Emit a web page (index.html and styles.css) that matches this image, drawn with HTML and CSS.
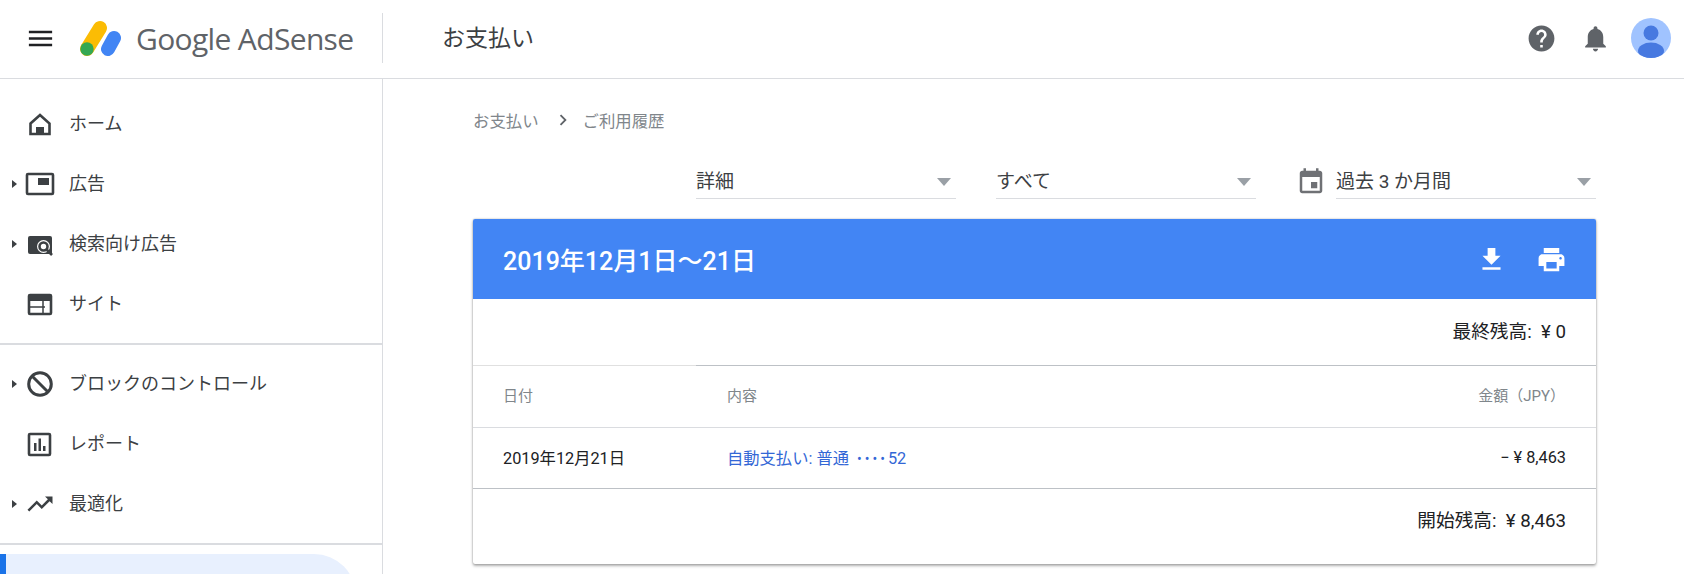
FILE: index.html
```html
<!DOCTYPE html>
<html lang="ja">
<head>
<meta charset="utf-8">
<title>お支払い - Google AdSense</title>
<link rel="stylesheet" href="styles.css">
</head>
<body>
<header class="topbar">
  <div class="brand">
    <svg class="menu-icon" viewBox="0 0 24 24"><path d="M3 18h18v-2H3v2zm0-5h18v-2H3v2zm0-7v2h18V6H3z"/></svg>
    <svg class="logo-mark" viewBox="0 0 42 36">
      <line x1="20" y1="8" x2="7" y2="29" class="logo-yellow"/>
      <line x1="34" y1="18" x2="28" y2="29" class="logo-blue"/>
      <circle cx="7" cy="29" r="6.7" class="logo-green"/>
    </svg>
    <span class="logo-text">Google AdSense</span>
    <span class="brand-divider"></span>
  </div>
  <h1 class="page-title">お支払い</h1>
  <div class="top-actions">
    <svg class="top-icon help" viewBox="0 0 24 24"><path d="M12 2C6.48 2 2 6.48 2 12s4.48 10 10 10 10-4.48 10-10S17.52 2 12 2zm1 17h-2v-2h2v2zm2.07-7.75l-.9.92C13.45 12.9 13 13.5 13 15h-2v-.5c0-1.1.45-2.1 1.17-2.83l1.24-1.26c.37-.36.59-.86.59-1.41 0-1.1-.9-2-2-2s-2 .9-2 2H8c0-2.21 1.79-4 4-4s4 1.79 4 4c0 .88-.36 1.68-.93 2.25z"/></svg>
    <svg class="top-icon bell" viewBox="0 0 24 24"><path d="M12 22c1.1 0 2-.9 2-2h-4c0 1.1.9 2 2 2zm6-6v-5c0-3.07-1.63-5.64-4.5-6.32V4c0-.83-.67-1.5-1.5-1.5s-1.5.67-1.5 1.5v.68C7.64 5.36 6 7.92 6 11v5l-2 2v1h16v-1l-2-2z"/></svg>
    <svg class="avatar" viewBox="0 0 40 40"><defs><clipPath id="avatar-clip"><circle cx="20" cy="20" r="20"/></clipPath></defs><circle cx="20" cy="20" r="20" class="avatar-bg"/><g clip-path="url(#avatar-clip)" class="avatar-fg"><circle cx="20" cy="15" r="7.5"/><ellipse cx="20" cy="33" rx="13" ry="8.5"/></g></svg>
  </div>
</header>
<div class="shell">
  <aside class="sidebar">
    <nav class="nav-group first">
      <a class="nav-item"><span class="caret none"></span>
        <svg class="nav-icon" viewBox="0 0 30 30"><path class="ln" d="M5.500 14.500L15 6l9.500 8.500V25h-19z"/><rect class="fl" x="11" y="18" width="8" height="7"/></svg>
        <span class="nav-label">ホーム</span></a>
      <a class="nav-item"><span class="caret"></span>
        <svg class="nav-icon" viewBox="0 0 30 30"><rect class="ln" x="2" y="5" width="26" height="20" rx="1"/><rect class="fl" x="13" y="9" width="11" height="7"/></svg>
        <span class="nav-label">広告</span></a>
      <a class="nav-item"><span class="caret"></span>
        <svg class="nav-icon" viewBox="0 0 30 30"><path class="fl" d="M5 7h20a2 2 0 0 1 2 2v16H5a2 2 0 0 1-2-2V9a2 2 0 0 1 2-2z"/><circle class="ln-w" cx="18.500" cy="17.500" r="6.500"/><circle class="ln" cx="18.500" cy="17.500" r="4"/><path class="ln" d="M21.500 20.500l5.500 5.500"/></svg>
        <span class="nav-label">検索向け広告</span></a>
      <a class="nav-item"><span class="caret none"></span>
        <svg class="nav-icon" viewBox="0 0 30 30"><rect class="ln" x="4" y="6" width="22" height="19" rx="1"/><rect class="fl" x="4" y="6" width="22" height="6"/><path class="ln-thin" d="M4 18h16M18 12v13"/></svg>
        <span class="nav-label">サイト</span></a>
    </nav>
    <nav class="nav-group">
      <a class="nav-item"><span class="caret"></span>
        <svg class="nav-icon" viewBox="0 0 30 30"><circle class="ln-b" cx="15" cy="15" r="11.300"/><path class="ln-b" d="M7 7l16 16"/></svg>
        <span class="nav-label">ブロックのコントロール</span></a>
      <a class="nav-item"><span class="caret none"></span>
        <svg class="nav-icon" viewBox="0 0 30 30"><rect class="ln" x="4" y="5" width="21" height="21" rx="1"/><path class="fl" d="M9 14h2.500v8H9zM13.500 9.500H16V22h-2.500zM18 17h2.500v5H18z"/></svg>
        <span class="nav-label">レポート</span></a>
      <a class="nav-item"><span class="caret"></span>
        <svg class="nav-icon" viewBox="0 0 24 24"><path class="fl" d="M16 6l2.290 2.290-4.880 4.880-4-4L2 16.590 3.410 18l6-6 4 4 6.300-6.290L22 12V6z"/></svg>
        <span class="nav-label">最適化</span></a>
    </nav>
    <div class="nav-active"></div>
  </aside>
  <main class="content">
    <div class="breadcrumb">
      <span>お支払い</span>
      <svg class="crumb-sep" viewBox="0 0 24 24"><path d="M10 6L8.590 7.410 13.170 12l-4.580 4.590L10 18l6-6z"/></svg>
      <span>ご利用履歴</span>
    </div>
    <div class="filters">
      <div class="select"><span>詳細</span><i class="tri"></i></div>
      <div class="select"><span>すべて</span><i class="tri"></i></div>
      <div class="date-filter">
        <svg class="cal-icon" viewBox="0 0 24 24"><path d="M17 12h-5v5h5v-5zM16 1v2H8V1H6v2H5c-1.110 0-1.990.9-1.990 2L3 19c0 1.100.89 2 2 2h14c1.100 0 2-.9 2-2V5c0-1.100-.9-2-2-2h-1V1h-2zm3 18H5V8h14v11z"/></svg>
        <div class="select"><span>過去 3 か月間</span><i class="tri"></i></div>
      </div>
    </div>
    <section class="card">
      <div class="card-head">
        <h2>2019年12月1日～21日</h2>
        <div class="card-actions">
          <svg viewBox="0 0 24 24"><path d="M19 9h-4V3H9v6H5l7 7 7-7zM5 18v2h14v-2H5z"/></svg>
          <svg viewBox="0 0 24 24"><path d="M19 8H5c-1.660 0-3 1.340-3 3v6h4v4h12v-4h4v-6c0-1.660-1.340-3-3-3zm-3 11H8v-5h8v5zm3-7c-.55 0-1-.45-1-1s.45-1 1-1 1 .45 1 1-.45 1-1 1zm-1-9H6v4h12V3z"/></svg>
        </div>
      </div>
      <div class="balance end">最終残高:&nbsp; ¥ 0</div>
      <div class="row thead">
        <span class="c-date">日付</span><span class="c-desc">内容</span><span class="c-amt">金額（JPY）</span>
      </div>
      <div class="row tbody">
        <span class="c-date">2019年12月21日</span><a class="c-desc link">自動支払い: 普通 <span class="dots">••••</span>52</a><span class="c-amt num">− ¥ 8,463</span>
      </div>
      <div class="balance start">開始残高:&nbsp; ¥ 8,463</div>
    </section>
  </main>
</div>
</body>
</html>
```
FILE: styles.css
```css
* { box-sizing: border-box; }
html, body { margin: 0; height: 574px; overflow: hidden; background: #fff; }
body { font-family: Roboto, "Noto Sans CJK JP", sans-serif; color: #3c4043; }

.topbar { display: flex; align-items: center; height: 79px; border-bottom: 1px solid #dadce0; }
.brand { display: flex; align-items: center; width: 383px; height: 78px; position: relative; padding: 0 0 2px 25px; }
.menu-icon { width: 31px; height: 31px; fill: #202124; flex: none; }
.logo-mark { width: 42px; height: 36px; margin-left: 24px; flex: none; }
.logo-yellow { stroke: #fbbc04; stroke-width: 14; stroke-linecap: round; }
.logo-blue { stroke: #4285f4; stroke-width: 14; stroke-linecap: round; }
.logo-green { fill: #34a853; }
.logo-text { font-family: "Open Sans", sans-serif; font-size: 30px; color: #5f6368; margin-left: 14px; white-space: nowrap; letter-spacing: -0.65px; }
.brand-divider { position: absolute; right: 0; top: 13px; height: 50px; width: 1px; background: #dadce0; }
.page-title { font-size: 23px; font-weight: 400; margin: 0 0 6px 59px; color: #3c4043; }
.top-actions { margin-left: auto; display: flex; align-items: center; padding: 0 13px 2px 0; }
.top-icon { width: 31px; height: 31px; fill: #5f6368; }
.help { margin-right: 23.500px; }
.bell { margin-right: 20px; }
.avatar { width: 40px; height: 40px; }
.avatar-bg { fill: #a0c3ff; }
.avatar-fg { fill: #4779e0; }

.shell { display: flex; height: 495px; }
.sidebar { width: 383px; flex: none; border-right: 1px solid #dadce0; overflow: hidden; }
.nav-group { border-bottom: 2px solid #dadce0; padding: 9px 0 9px; }
.nav-group.first { padding: 15px 0 9px; }
.nav-item { display: flex; align-items: center; height: 60px; padding-left: 12px; font-size: 18px; color: #3c4043; }
.nav-label { padding-bottom: 4px; }
.caret { width: 0; height: 0; margin-right: 8px; border-left: 5px solid #3c4043; border-top: 4.500px solid transparent; border-bottom: 4.500px solid transparent; flex: none; }
.caret.none { border-left-color: transparent; }
.nav-icon { width: 30px; height: 30px; margin-right: 14px; flex: none; }
.ln, .ln-b, .ln-thin, .ln-w { fill: none; stroke: #3c4043; }
.ln { stroke-width: 2.600; }
.ln-b { stroke-width: 3; }
.ln-thin { stroke-width: 1.500; }
.ln-w { stroke: #fff; stroke-width: 0; fill: #fff; }
.fl { fill: #3c4043; }
.nav-active { height: 60px; width: 356px; margin-top: 9px; background: #e8f0fe; border-left: 6px solid #1a73e8; border-top-right-radius: 42px; }

.content { flex: 1; padding: 0 88px 0 90px; }
.breadcrumb { display: flex; align-items: center; height: 24px; margin-top: 29px; font-size: 16.400px; color: #80868b; }
.crumb-sep { width: 22px; height: 22px; fill: #5f6368; margin: 0 9px 0 13px; }
.filters { display: flex; justify-content: flex-end; margin-top: 20px; height: 47px; }
.select { display: flex; align-items: flex-end; justify-content: space-between; width: 260px; height: 47px; padding-bottom: 2px; border-bottom: 1px solid #dadce0; font-size: 19px; line-height: 28px; color: #3c4043; }
.select + .select { margin-left: 40px; }
.tri { width: 0; height: 0; margin: 0 5px 10px 0; border-top: 8px solid #9aa0a6; border-left: 7px solid transparent; border-right: 7px solid transparent; }
.date-filter { display: flex; align-items: flex-end; margin-left: 40px; }
.cal-icon { width: 30px; height: 30px; fill: #6f7175; margin: 0 10px 2px 0; }

.card { margin-top: 20px; width: 1123px; border-radius: 2px; background: #fff; box-shadow: 0 2px 3px rgba(0, 0, 0, .3), 0 0 2px rgba(0, 0, 0, .3); }
.card-head { display: flex; align-items: center; justify-content: space-between; height: 80px; padding: 0 29px 0 30px; background: #4285f4; color: #fff; border-radius: 2px 2px 0 0; }
.card-head h2 { margin: 0; font-size: 25px; font-weight: 500; }
.card-actions { display: flex; gap: 29px; }
.card-actions svg { width: 31px; height: 31px; fill: #fff; }
.balance { display: flex; align-items: center; justify-content: flex-end; padding-right: 30px; font-size: 18.700px; color: #202124; }
.balance.end { height: 67px; border-bottom: 1px solid; border-image: linear-gradient(to right, #e0e0e0 224px, #bdc1c6 224px) 1; padding-bottom: 6px; }
.balance.start { height: 75px; padding-bottom: 16px; }
.row { display: flex; align-items: center; padding: 0 30px; }
.thead { height: 62px; padding-bottom: 5px; font-size: 15px; color: #80868b; border-bottom: 1px solid #dadce0; }
.tbody { height: 61px; padding-bottom: 2px; font-size: 16.300px; color: #202124; border-bottom: 1px solid #bdc1c6; }
.c-date { width: 224px; }
.c-desc { flex: 1; }
.thead .c-amt { margin-right: 1px; }
.link { color: #3367d6; }
.dots { font-size: 14px; letter-spacing: 3px; margin-left: 4px; }
```
